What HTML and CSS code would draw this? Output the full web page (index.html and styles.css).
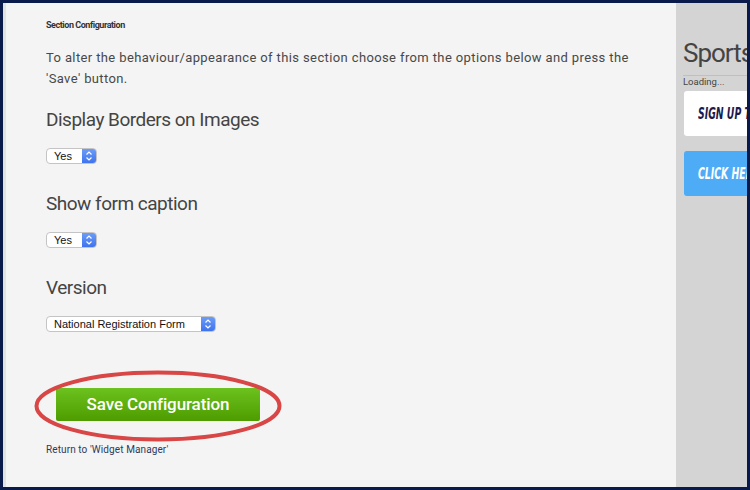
FILE: index.html
```html
<!DOCTYPE html>
<html>
<head>
<meta charset="utf-8">
<link rel="stylesheet" href="styles.css">
</head>
<body>
<div class="frame">
  <main class="main">
    <div class="section-title">Section Configuration</div>
    <p class="intro">To alter the behaviour/appearance of this section choose from the options below and press the 'Save' button.</p>

    <h2 class="field-label first">Display Borders on Images</h2>
    <div class="select small"><span class="select-text">Yes</span><span class="select-arrow"><svg viewBox="0 0 8 12" width="8" height="12"><path d="M1.5 4.5 L4 2 L6.5 4.5 M1.5 7.5 L4 10 L6.5 7.5" fill="none" stroke="#fff" stroke-width="1.2"/></svg></span></div>

    <h2 class="field-label">Show form caption</h2>
    <div class="select small"><span class="select-text">Yes</span><span class="select-arrow"><svg viewBox="0 0 8 12" width="8" height="12"><path d="M1.5 4.5 L4 2 L6.5 4.5 M1.5 7.5 L4 10 L6.5 7.5" fill="none" stroke="#fff" stroke-width="1.2"/></svg></span></div>

    <h2 class="field-label">Version</h2>
    <div class="select wide"><span class="select-text">National Registration Form</span><span class="select-arrow"><svg viewBox="0 0 8 12" width="8" height="12"><path d="M1.5 4.5 L4 2 L6.5 4.5 M1.5 7.5 L4 10 L6.5 7.5" fill="none" stroke="#fff" stroke-width="1.2"/></svg></span></div>

    <div class="save-wrap">
      <button class="save-btn">Save Configuration</button>
      <svg class="annotation" viewBox="0 0 248 72" width="248" height="72"><ellipse cx="124" cy="36" rx="121.5" ry="33.5" fill="none" stroke="#d84646" stroke-width="4"/></svg>
    </div>
    <a class="return-link" href="#">Return to 'Widget Manager'</a>
  </main>
  <aside class="sidebar">
    <div class="side-title">Sports</div>
    <div class="loading">Loading...</div>
    <div class="promo white"><span class="promo-text">SIGN UP TODAY</span></div>
    <div class="promo blue"><span class="promo-text">CLICK HERE</span></div>
  </aside>
</div>
</body>
</html>
```

FILE: styles.css
```css
html, body {
  margin: 0;
  padding: 0;
  background: #0a1a4b;
}
.frame {
  box-sizing: border-box;
  width: 750px;
  height: 490px;
  border: 3px solid #0a1a4b;
  display: flex;
  overflow: hidden;
  font-family: "Roboto", "Liberation Sans", sans-serif;
}
.main {
  flex: 1;
  background: #f4f4f4;
  border-left: 3px solid #e2e2e2;
  padding: 16px 40px 0 40px;
  color: #444;
}
.section-title {
  font-size: 9px;
  font-weight: 700;
  letter-spacing: -0.45px;
  color: #333;
  line-height: 12px;
}
.intro {
  margin: 16px 0 0 0;
  font-size: 13px;
  line-height: 21px;
  color: #484848;
  letter-spacing: 0.38px;
}
.field-label {
  margin: 27px 0 0 0;
  font-size: 19px;
  font-weight: 400;
  line-height: 26px;
  color: #444;
  letter-spacing: -0.5px;
}
.field-label.first {
  margin-top: 18px;
}
.select {
  margin-top: 15px;
  height: 16px;
  box-sizing: border-box;
  border: 1px solid #c4c4c4;
  border-radius: 4px;
  background: #fff;
  display: flex;
  align-items: stretch;
  overflow: hidden;
  font-family: "Liberation Sans", sans-serif;
  font-size: 11px;
  color: #111;
}
.select.small { width: 51px; }
.select.wide { width: 170px; }
.select-text {
  flex: 1;
  padding-left: 7px;
  line-height: 14px;
}
.select-arrow {
  width: 14px;
  background: linear-gradient(#6b9cf8, #3f73ee);
  display: flex;
  align-items: center;
  justify-content: center;
}
.save-wrap {
  position: relative;
  margin-top: 56px;
  margin-left: 10px;
  width: 204px;
}
.save-btn {
  display: block;
  width: 204px;
  height: 33px;
  border: none;
  border-radius: 2px;
  background: linear-gradient(#6cc21e, #4e9c00);
  color: #fff;
  font-family: "Roboto", "Liberation Sans", sans-serif;
  font-size: 17px;
  font-weight: 500;
  letter-spacing: -0.1px;
  padding: 0 0 2px 0;
}
.annotation {
  position: absolute;
  left: -22px;
  top: -18px;
}
.return-link {
  display: block;
  margin-top: 23px;
  font-size: 10px;
  letter-spacing: 0.1px;
  color: #2e3a5c;
  text-decoration: none;
}
.sidebar {
  width: 71px;
  flex: none;
  background: #d4d4d4;
  padding: 0 0 0 7px;
  box-sizing: border-box;
  overflow: hidden;
  white-space: nowrap;
}
.side-title {
  margin-top: 33px;
  font-size: 26px;
  line-height: 34px;
  color: #444;
  letter-spacing: -1px;
  padding-bottom: 5px;
  border-bottom: 1px solid #c0c0c0;
}
.loading {
  font-size: 9.5px;
  color: #444;
  line-height: 12px;
  margin-top: 0;
}
.promo {
  margin-left: 1px;
  width: 120px;
  height: 45px;
  border-radius: 3px;
  line-height: 45px;
  padding-left: 14px;
}
.promo-text {
  display: inline-block;
  font-family: "DejaVu Sans Condensed", "Liberation Sans", sans-serif;
  font-size: 15px;
  font-weight: 700;
  font-style: italic;
  transform: scaleX(0.69);
  transform-origin: left center;
}
.promo.white {
  margin-top: 3px;
  background: #fff;
  color: #1c1a4d;
}
.promo.blue {
  margin-top: 15px;
  background: #4eabf6;
  color: #fff;
}
```
